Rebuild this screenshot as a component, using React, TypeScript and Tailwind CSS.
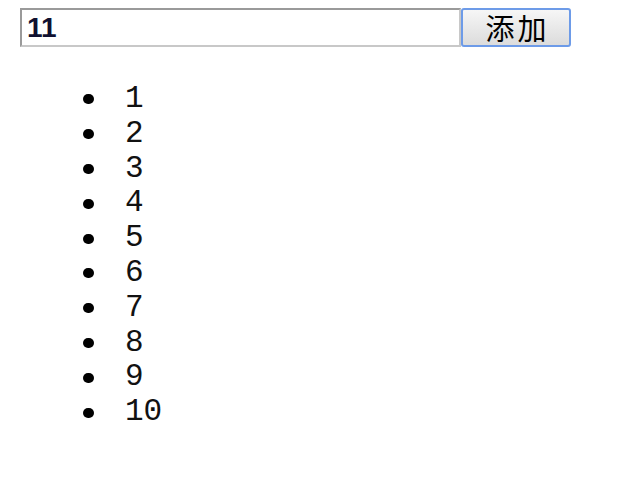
import React, { useState } from 'react';

const App = () => {
  const [items] = useState(['1', '2', '3', '4', '5', '6', '7', '8', '9', '10']);
  const [text, setText] = useState('11');

  return (
    <div className="min-h-screen w-[640px] h-[480px] bg-white">
      {/* Add form */}
      <div className="flex pl-[20px] pt-[8px]">
        <input
          value={text}
          onChange={(e) => setText(e.target.value)}
          className="w-[441px] h-[39px] border-2 border-t-[#9a9a9a] border-l-[#9a9a9a] border-r-[#c8c8c8] border-b-[#c8c8c8] pl-[5px] text-[28px] font-bold text-[#101030] outline-none font-['Liberation_Sans',Arial,sans-serif]"
        />
        <button className="w-[110px] h-[39px] rounded-[3px] border-2 border-[#6d9be8] bg-gradient-to-b from-[#f6f6f6] to-[#dcdcdc] text-[29px] leading-none tracking-[3px] pl-[3px] text-black font-['Noto_Sans_CJK_SC',sans-serif]">
          添加
        </button>
      </div>

      {/* Items */}
      <ul className="mt-[35px] font-['Liberation_Mono',monospace] text-[31px] leading-[34.8px] text-[#111]">
        {items.map((item, index) => (
          <li key={index} className="flex items-center h-[34.8px]">
            <span className="ml-[83px] w-[11px] h-[10px] rounded-full bg-black"></span>
            <span className="ml-[31px]">{item}</span>
          </li>
        ))}
      </ul>
    </div>
  );
};

export default App;
